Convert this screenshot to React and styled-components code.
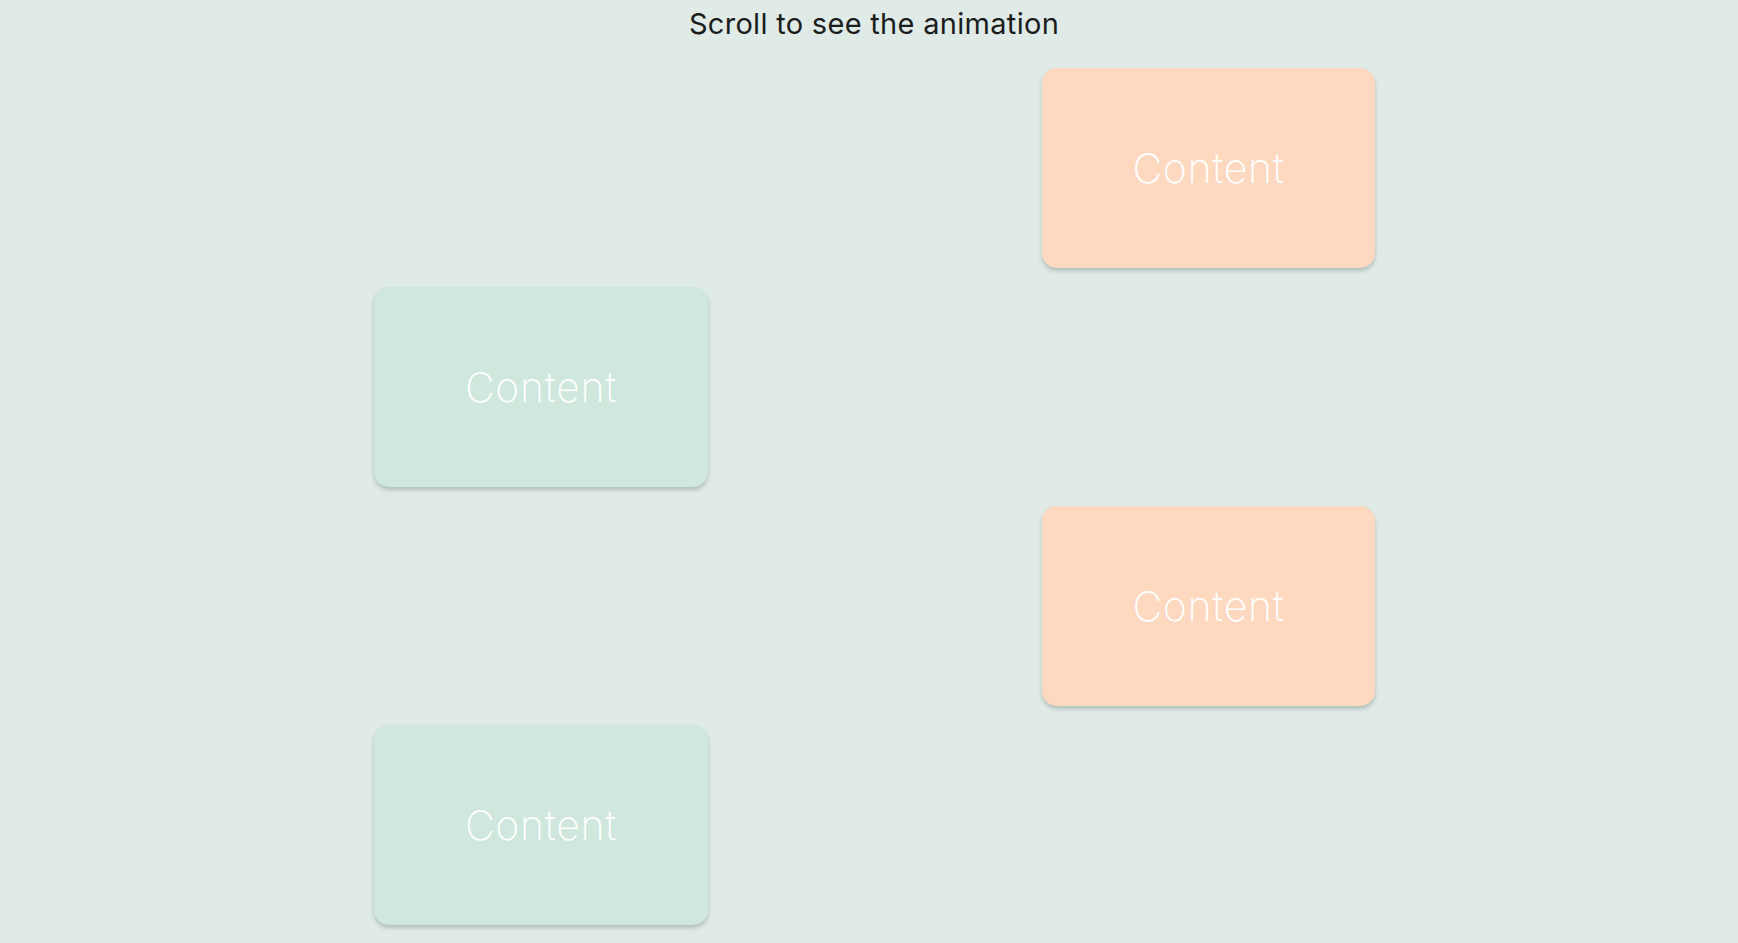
import React from "react";
import styled, { createGlobalStyle } from "styled-components";

const cards = [
  { side: "right", tone: "peach" },
  { side: "left", tone: "mint" },
  { side: "right", tone: "peach" },
  { side: "left", tone: "mint" }
];

export default function App() {
  return (
    <>
      <GlobalStyle />
      <Page>
        <Title>Scroll to see the animation</Title>
        <List>
          {cards.map((card, i) => (
            <Row key={i}>
              <Card side={card.side} tone={card.tone}>
                Content
              </Card>
            </Row>
          ))}
        </List>
      </Page>
    </>
  );
}

// ------- STYLES

const GlobalStyle = createGlobalStyle`
  html, body {
    margin: 0;
    padding: 0;
    background: #e0ebe7;
    overflow: hidden;
  }
  body {
    font-family: Inter, "Noto Sans", sans-serif;
  }
`;

const Page = styled.div`
  min-height: 943px;
  background: #e0ebe7;
`;

const Title = styled.h1`
  margin: 0;
  padding: 6px 0 0 10px;
  height: 68px;
  box-sizing: border-box;
  text-align: center;
  font-family: Inter, "Noto Sans", sans-serif;
  font-size: 29px;
  line-height: 36px;
  font-weight: 400;
  letter-spacing: 0.3px;
  color: #1b1d1c;
`;

const List = styled.div`
  display: flex;
  flex-direction: column;
  gap: 19px;
  padding-left: 374px;
`;

const Row = styled.div`
  display: grid;
  grid-template-columns: 334px 334px 334px;
`;

const tones = {
  peach: "#ffd9bf",
  mint: "#cfe7dc"
};

const Card = styled.div`
  grid-column: ${(p) => (p.side === "left" ? 1 : 3)};
  width: ${(p) => (p.side === "left" ? "334px" : "333px")};
  height: 200px;
  border-radius: 15px;
  background: ${(p) => tones[p.tone]};
  box-shadow: 0 3px 4px rgba(60, 80, 70, 0.28);
  display: flex;
  align-items: center;
  justify-content: center;
  color: #ffffff;
  font-family: Inter, "Noto Sans", sans-serif;
  font-size: 41px;
  font-weight: 200;
  letter-spacing: 0.7px;
`;
